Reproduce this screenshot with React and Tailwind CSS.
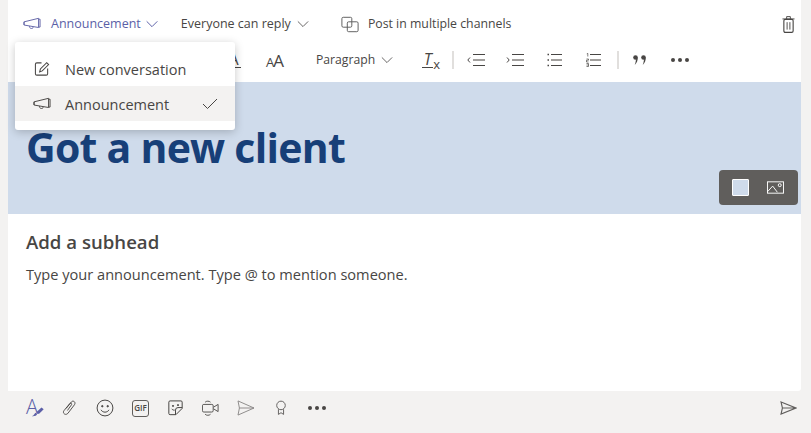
import React from "react";

const Chevron = ({ className = "", color = "#605e5c", w = 12 }) => (
  <svg width={w} height="8" viewBox="0 0 14 9" className={className} fill="none" stroke={color} strokeWidth="1.1">
    <path d="M1 1.5 7 7.5 13 1.5" />
  </svg>
);

const Megaphone = ({ color = "#616161" }) => (
  <svg width="18" height="14" viewBox="0 0 20 16" fill="none" stroke={color} strokeWidth="1.1">
    <path d="M1 5.500 17.500 1.500V12L1 9.200Z" />
    <path d="M1 5.500c-.5 1-.5 2.700 0 3.700" />
    <path d="M7 10.500c0 3.200 4 3.400 4.500 1" />
    <path d="M17.500 2.500h1.700v9h-1.700" />
  </svg>
);

const Sep = () => <div className="w-[2px] h-[18px] bg-[#e1dfdd]" />;

const Lines = ({ marks }) => (
  <svg width="15" height="14" viewBox="0 0 15 14" fill="none" stroke="#484644" strokeWidth="1">
    <path d="M4 1.500h11M4 12.500h11" />
    <path d="M4 7h11" stroke="#a19f9d" strokeWidth="2" />
    {marks}
  </svg>
);

const Indent = ({ dir }) => (
  <svg width="18" height="14" viewBox="0 0 18 14" fill="none" stroke="#484644" strokeWidth="1">
    <path d="M6 1.500h12M6 12.500h12" />
    <path d="M6 7h12" stroke="#a19f9d" strokeWidth="2" />
    <path d={dir === "out" ? "M3 4.500 .8 7 3 9.500" : "M1 4.500 3.200 7 1 9.500"} />
  </svg>
);

const Dots = () => (
  <div className="flex gap-[3px]">
    <span className="w-[4px] h-[4px] rounded-full bg-[#484644]" />
    <span className="w-[4px] h-[4px] rounded-full bg-[#484644]" />
    <span className="w-[4px] h-[4px] rounded-full bg-[#484644]" />
  </div>
);

export default function App() {
  return (
    <div className="relative w-[811px] h-[433px] overflow-hidden bg-[#f3f2f1] font-['Open_Sans',sans-serif] text-[#484644]">
      <div className="mx-2 w-[793px] h-[391px] bg-white rounded-br-[3px] flex flex-col">
        {/* top bar */}
        <div className="h-[42px] pt-[6px] flex items-center pl-[15px] pr-[6px] text-[12.5px]">
          <Megaphone color="#6264a7" />
          <span className="ml-[10px] text-[#5b5fa7]">Announcement</span>
          <Chevron className="ml-[4px]" color="#5b5fa7" w={14} />
          <span className="ml-[22px] text-[#484644]">Everyone can reply</span>
          <Chevron className="ml-[6px]" />
          <svg className="ml-[32px]" width="18" height="17" viewBox="0 0 20 18" fill="none" stroke="#616161" strokeWidth="1.1">
            <rect x="1" y="1" width="11" height="11" rx="1.500" />
            <rect x="7" y="6" width="12" height="11" rx="1.500" />
          </svg>
          <span className="ml-[9px] text-[12.3px] text-[#484644]">Post in multiple channels</span>
          <svg className="ml-auto" width="13" height="19" viewBox="0 0 14 19" fill="none" stroke="#484644" strokeWidth="1">
            <path d="M.5 3.500h13M5 3.500V1h4v2.500" />
            <rect x="2" y="4" width="10" height="14" rx="1.500" strokeWidth="1.200" />
            <path d="M5.500 7v8M8.500 7v8" />
          </svg>
        </div>

        {/* format bar */}
        <div className="h-[40px] pb-[4px] flex items-center pl-[218px] text-[12.2px]">
          <span className="w-[15px] text-center text-[16px] leading-[15px] border-b border-[#484644]">A</span>
          <span className="ml-[25px] w-[18px] text-[17px] leading-none tracking-[-1px]"><span className="text-[13px]">A</span>A</span>
          <span className="ml-[32px]">Paragraph</span>
          <Chevron className="ml-[6px]" />
          <span className="ml-[29px] relative w-[17px] h-[17px]">
            <span className="block w-[11px] text-center italic text-[16px] leading-[15px] border-b border-[#484644]">T</span>
            <span className="absolute left-[11px] top-[6px] text-[13px] leading-[13px]">x</span>
          </span>
          <div className="ml-[13px]"><Sep /></div>
          <div className="ml-[13px]"><Indent dir="out" /></div>
          <div className="ml-[21px]"><Indent dir="in" /></div>
          <div className="ml-[23px]">
            <Lines marks={<path d="M.5 1.500h1.500M.5 7h1.500M.5 12.500h1.500" strokeWidth="1.500" />} />
          </div>
          <div className="ml-[24px]">
            <Lines marks={<path d="M.8 .8 1.800 .4V3.500M.5 6h2v1.200H.5V9h2M.5 10.500h2v3h-2M.5 12h2" strokeWidth=".7" />} />
          </div>
          <div className="ml-[16px]"><Sep /></div>
          <svg className="ml-[14px]" width="14" height="10" viewBox="0 0 14 10" fill="#484644">
            <circle cx="2.500" cy="2.500" r="2.300" />
            <path d="M3 4.500c.8-.5 1.500-1.500 1.700-2.500.2 3-.7 6-3 8 .7-1.500 1-3.500 1.300-5.500Z" />
            <circle cx="10.500" cy="2.500" r="2.300" />
            <path d="M11 4.500c.8-.5 1.500-1.500 1.700-2.500.2 3-.7 6-3 8 .7-1.500 1-3.500 1.300-5.500Z" />
          </svg>
          <div className="ml-[24px]"><Dots /></div>
        </div>

        {/* banner */}
        <div className="relative h-[132px] bg-[#cfdbeb] pl-[18px]">
          <h1 className="mt-[36px] text-[41px] leading-[58px] tracking-[-0.75px] font-bold text-[#173f78]">Got a new client</h1>
          <div className="absolute right-[3px] bottom-[9px] w-[79px] h-[35px] rounded-[4px] bg-[#605e5c] flex items-center pl-[13px] gap-[18px]">
            <div className="w-[17px] h-[17px] bg-[#cfdbeb] border border-white rounded-[1px]" />
            <svg width="17" height="13" viewBox="0 0 18 13" fill="none" stroke="#fff" strokeWidth="1">
              <rect x=".5" y=".5" width="17" height="12" />
              <path d="M.5 11 6 5l5 6.500" />
              <circle cx="13.500" cy="4" r="1.600" />
            </svg>
          </div>
        </div>

        {/* body */}
        <div className="pl-[18px] pt-[15px]">
          <h2 className="text-[18.6px] leading-[26px] font-semibold text-[#484644]">Add a subhead</h2>
          <p className="mt-[10px] text-[14.6px] leading-[19px] text-[#484644]">Type your announcement. Type @ to mention someone.</p>
        </div>
      </div>

      {/* compose actions */}
      <div className="h-[34px] flex items-center pl-[26px] pr-[14px]">
        <div className="w-[18px] h-[20px] relative text-[#5b5fa7] text-[20px] font-light leading-[18px]">
          A
          <svg className="absolute left-[5px] top-[7px]" width="14" height="12" viewBox="0 0 16 13" fill="#5b5fa7">
            <path d="M6 8 12 2.500l2.500 2L9 10Z" />
            <path d="M1 12.500c3 .3 5.500-.5 6-2.500L5.500 8.500C4 9 4 11.500 1 12.500Z" />
          </svg>
        </div>
        <svg className="ml-[18px]" width="15" height="18" viewBox="0 0 18 20" fill="none" stroke="#484644" strokeWidth="1.100">
          <path d="M5 10.500 11.500 2.500c2-2 5.500.5 3.500 3.500L7 16.500c-3 3-7-.5-4.500-3.500L9.500 4.500c1-1 2.700.3 2 1.500L6.500 13" />
        </svg>
        <svg className="ml-[19px]" width="18" height="18" viewBox="0 0 20 20" fill="none" stroke="#484644" strokeWidth="1.100">
          <circle cx="10" cy="10" r="8.800" />
          <circle cx="7" cy="8" r=".8" fill="#484644" />
          <circle cx="13" cy="8" r=".8" fill="#484644" />
          <path d="M5.500 12c2 3.500 7 3.500 9 0" />
        </svg>
        <div className="ml-[18px] w-[17px] h-[17px] border border-[#605e5c] rounded-[3px] flex items-center justify-center text-[8px] font-semibold leading-none">GIF</div>
        <svg className="ml-[19px]" width="15" height="16" viewBox="0 0 18 19" fill="none" stroke="#484644" strokeWidth="1.200">
          <path d="M1 2.500A1.500 1.500 0 0 1 2.500 1h13A1.500 1.500 0 0 1 17 2.500V10l-7.500 7.500h-7A1.500 1.500 0 0 1 1 16Z" />
          <path d="M17 9h-5a3 3 0 0 0-3 3v5.500" />
          <circle cx="6" cy="7" r=".7" fill="#484644" />
          <circle cx="12" cy="6" r=".7" fill="#484644" />
          <path d="M4.500 10.500c1 1.500 2.500 1.700 3.500 1.500" />
        </svg>
        <svg className="ml-[19px]" width="17" height="18" viewBox="0 0 19 18" fill="none" stroke="#484644" strokeWidth="1">
          <rect x=".5" y="5" width="12" height="8.500" rx="1.500" />
          <path d="M13 8l5-3v8l-5-3" />
          <path d="M3.500 2.500C5 1 8 1 9.500 2.500M3.500 16c1.500 1.500 4.500 1.500 6 0" />
        </svg>
        <svg className="ml-[18px]" width="18" height="16" viewBox="0 0 19 17" fill="none" stroke="#8a8886" strokeWidth="1">
          <path d="M1 1 18 8.500 1 16l1.500-7.500ZM2.500 8.500H18" />
        </svg>
        <svg className="ml-[20px]" width="12" height="16" viewBox="0 0 14 18" fill="none" stroke="#605e5c" strokeWidth="1.100">
          <circle cx="7" cy="6" r="5" />
          <path d="M4 10.500V16.500l3-2 3 2V10.500" />
        </svg>
        <div className="ml-[21px]"><Dots /></div>
        <svg className="ml-auto" width="17" height="14" viewBox="0 0 18 15" fill="none" stroke="#605e5c" strokeWidth="1.200">
          <path d="M1 1 17 7.500 1 14l1.500-6.500ZM2.500 7.500H17" />
        </svg>
      </div>

      {/* dropdown */}
      <div className="absolute left-[15px] top-[42px] w-[220px] h-[88px] bg-white rounded-[3px] shadow-[0_2px_10px_rgba(0,0,0,0.22)] pt-[9px] text-[14.5px] text-[#484644]">
        <div className="h-[35px] flex items-center pl-[19px]">
          <svg width="16" height="16" viewBox="0 0 17 17" fill="none" stroke="#484644" strokeWidth="1.100">
            <path d="M8 2H3a1.500 1.500 0 0 0-1.500 1.500v10A1.500 1.500 0 0 0 3 15h10a1.500 1.500 0 0 0 1.500-1.500V8" />
            <path d="M6 11.500 6.800 8.500 13.500 1.800l2 2L8.800 10.500Z" />
          </svg>
          <span className="ml-[15px] pt-[2px]">New conversation</span>
        </div>
        <div className="h-[35px] bg-[#f3f2f1] flex items-center pl-[18px]">
          <Megaphone color="#484644" />
          <span className="ml-[14px] pt-[2px]">Announcement</span>
          <svg className="ml-auto mr-[17px]" width="16" height="12" viewBox="0 0 16 12" fill="none" stroke="#484644" strokeWidth="1">
            <path d="M1 6 5.500 10.500 15 1" />
          </svg>
        </div>
      </div>
    </div>
  );
}
